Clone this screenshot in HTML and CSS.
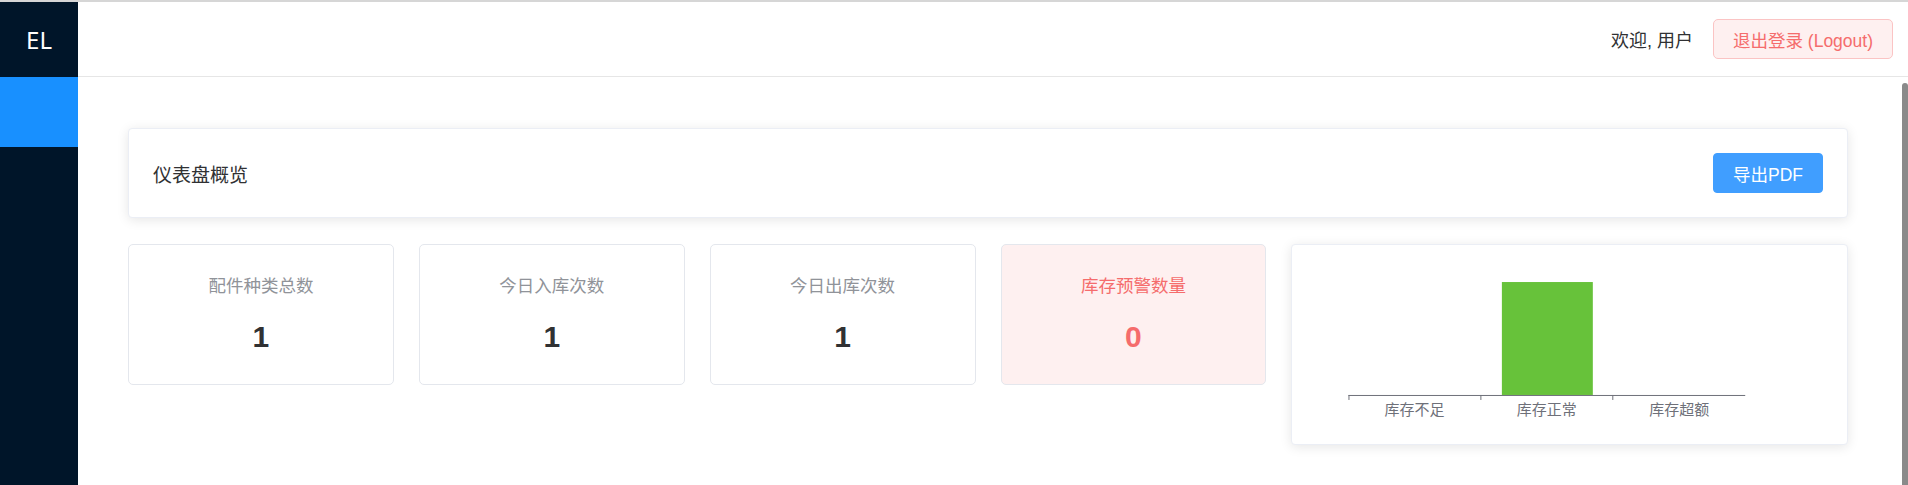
FILE: index.html
```html
<!DOCTYPE html>
<html lang="zh-CN">
<head>
<meta charset="utf-8">
<title>仪表盘概览</title>
<link rel="stylesheet" href="styles.css">
</head>
<body>
<div class="app">
  <aside class="sidebar">
    <div class="logo">EL</div>
    <div class="menu-item active"></div>
  </aside>
  <div class="right">
    <header class="header">
      <span class="welcome">欢迎, 用户</span>
      <button class="btn-logout">退出登录 (Logout)</button>
    </header>
    <main class="main">
      <div class="content">
        <section class="panel">
          <span class="panel-title">仪表盘概览</span>
          <button class="btn-primary">导出PDF</button>
        </section>
        <section class="stats">
          <div class="stat-card">
            <div class="stat-label">配件种类总数</div>
            <div class="stat-value">1</div>
          </div>
          <div class="stat-card">
            <div class="stat-label">今日入库次数</div>
            <div class="stat-value">1</div>
          </div>
          <div class="stat-card">
            <div class="stat-label">今日出库次数</div>
            <div class="stat-value">1</div>
          </div>
          <div class="stat-card warn">
            <div class="stat-label">库存预警数量</div>
            <div class="stat-value">0</div>
          </div>
          <div class="chart-card">
            <svg class="chart" viewBox="0 0 555 199" xmlns="http://www.w3.org/2000/svg">
              <rect x="210" y="37" width="91" height="113" fill="#67c23a"/>
              <line x1="56.5" y1="150.5" x2="453.5" y2="150.5" stroke="#6e7079" stroke-width="1"/>
              <line x1="57" y1="150" x2="57" y2="155" stroke="#6e7079" stroke-width="1"/>
              <line x1="189" y1="150" x2="189" y2="155" stroke="#6e7079" stroke-width="1"/>
              <line x1="321" y1="150" x2="321" y2="155" stroke="#6e7079" stroke-width="1"/>
              <text class="axis-label" x="122.5" y="170.5">库存不足</text>
              <text class="axis-label" x="255" y="170.5">库存正常</text>
              <text class="axis-label" x="387.5" y="170.5">库存超额</text>
            </svg>
          </div>
        </section>
      </div>
      <div class="scrollbar" aria-hidden="true"></div>
    </main>
  </div>
</div>
</body>
</html>
```

FILE: styles.css
```css
* { box-sizing: border-box; }

html, body { height: 100%; }

body {
  margin: 0;
  border-top: 2px solid #d6d6d6;
  overflow: hidden;
  font-family: "Liberation Sans", "Noto Sans CJK SC", sans-serif;
  color: #303133;
  background: #fff;
}

.app {
  display: flex;
  height: 100%;
}

.sidebar {
  width: 78px;
  flex: none;
  background: #001529;
}

.logo {
  height: 75px;
  display: flex;
  align-items: center;
  justify-content: center;
  color: #fff;
  font-family: "Noto Sans", sans-serif;
  font-size: 24px;
}

.menu-item {
  height: 70px;
}

.menu-item.active {
  background: #1890ff;
}

.right {
  flex: 1;
  min-width: 0;
  display: flex;
  flex-direction: column;
}

.header {
  height: 75px;
  flex: none;
  border-bottom: 1px solid #e6e6e6;
  display: flex;
  align-items: center;
  justify-content: flex-end;
  gap: 20px;
  padding-right: 15px;
}

.welcome {
  font-size: 18px;
  color: #303133;
}

.btn-logout {
  height: 40px;
  padding: 0 19px;
  font-family: inherit;
  font-size: 17.5px;
  color: #f56c6c;
  background: #fef0f0;
  border: 1px solid #fbc4c4;
  border-radius: 5px;
}

.main {
  flex: 1;
  min-height: 0;
  display: flex;
  overflow: hidden;
}

.content {
  flex: 1;
  min-width: 0;
  padding: 51px 54px 0 50px;
}

.scrollbar {
  flex: none;
  width: 6px;
  margin-top: 6px;
  background: #8a8a8a;
  border-radius: 3px 3px 0 0;
}

.panel {
  display: flex;
  align-items: center;
  justify-content: space-between;
  padding: 24px;
  background: #fff;
  border: 1px solid #ebeef5;
  border-radius: 4px;
  box-shadow: 0 2px 12px 0 rgba(0, 0, 0, 0.1);
}

.panel-title {
  font-size: 19px;
  color: #303133;
}

.btn-primary {
  height: 40px;
  padding: 0 19px;
  font-family: inherit;
  font-size: 17.5px;
  color: #fff;
  background: #409eff;
  border: 1px solid #409eff;
  border-radius: 4px;
}

.stats {
  margin-top: 26px;
  display: grid;
  grid-template-columns: repeat(6, minmax(0, 1fr));
  gap: 25px;
  align-items: start;
}

.stat-card {
  padding: 28px 0 29px;
  text-align: center;
  background: #fff;
  border: 1px solid #e4e7ed;
  border-radius: 5px;
}

.stat-label {
  font-size: 17.5px;
  line-height: 26px;
  color: #909399;
}

.stat-value {
  margin-top: 20px;
  font-size: 30px;
  line-height: 36px;
  font-weight: 700;
  color: #303133;
}

.stat-card.warn {
  background: #fef0f0;
}

.stat-card.warn .stat-label,
.stat-card.warn .stat-value {
  color: #f56c6c;
}

.chart-card {
  grid-column: span 2;
  height: 201px;
  background: #fff;
  border: 1px solid #ebeef5;
  border-radius: 4px;
  box-shadow: 0 2px 12px 0 rgba(0, 0, 0, 0.1);
}

.chart {
  display: block;
  width: 100%;
  height: 199px;
}

.axis-label {
  font-family: "Liberation Sans", "Noto Sans CJK SC", sans-serif;
  font-size: 15px;
  fill: #6e7079;
  text-anchor: middle;
}
```
